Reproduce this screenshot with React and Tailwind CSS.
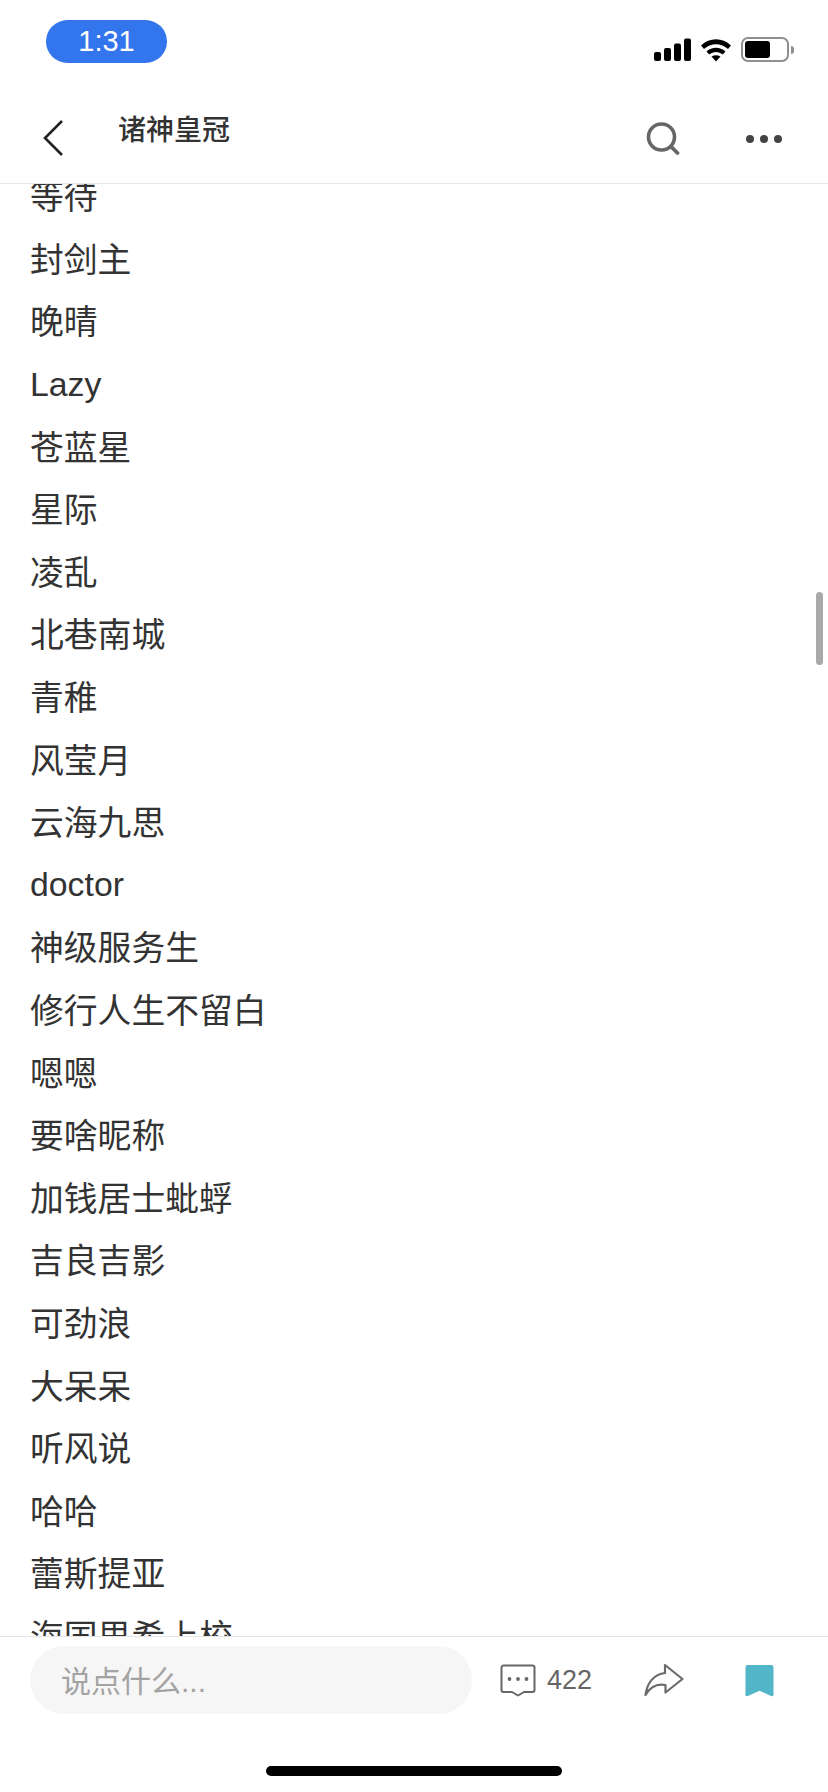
const names = ["等待","封剑主","晚晴","Lazy","苍蓝星","星际","凌乱","北巷南城","青稚","风莹月","云海九思","doctor","神级服务生","修行人生不留白","嗯嗯","要啥昵称","加钱居士蚍蜉","吉良吉影","可劲浪","大呆呆","听风说","哈哈","蕾斯提亚","海国思希上校"];

const sans = { fontFamily: '"Liberation Sans", "Noto Sans CJK SC", sans-serif' };

function StatusIcons() {
  return (
    <div className="flex items-center">
      <svg width="38" height="24" viewBox="0 0 38 24" className="mr-[9px]">
        <rect x="1" y="14" width="7" height="9" rx="2" fill="#000" />
        <rect x="11" y="10" width="7" height="13" rx="2" fill="#000" />
        <rect x="21" y="5.500" width="7" height="17.500" rx="2" fill="#000" />
        <rect x="31" y="0.500" width="7" height="22.500" rx="2" fill="#000" />
      </svg>
      <svg width="32" height="25" viewBox="0 0 32 25" className="mr-[9px]">
        <path d="M1 8.500C9.500 0 22.500 0 31 8.500L28 12C21 5.500 11 5.500 4 12Z" fill="#000" />
        <path d="M6.500 14.500C12 9.500 20 9.500 25.500 14.500L22.800 17.500C18.500 14 13.500 14 9.200 17.500Z" fill="#000" />
        <path d="M11.500 19.500C14.500 17.800 17.500 17.800 20.500 19.500L16 24.500Z" fill="#000" />
      </svg>
      <div className="flex items-center">
        <div className="flex h-[25px] w-[48px] items-center rounded-[7px] border-[2px] border-[#8f8f8f] p-[2px]">
          <div className="h-[17px] w-[25px] rounded-[3px] bg-black" />
        </div>
        <div className="ml-[2px] h-[8px] w-[3px] rounded-r-full bg-[#8f8f8f]" />
      </div>
    </div>
  );
}

function Header() {
  return (
    <div className="relative flex h-[97px] shrink-0 items-center border-b border-[#e9e9e9] pl-[42px] pr-[46px]">
      <svg width="22" height="38" viewBox="0 0 22 38" className="mt-[6px]">
        <path d="M20 2 L3 19 L20 36" fill="none" stroke="#222" strokeWidth="2.600" />
      </svg>
      <div className="ml-[54px] -mt-[8px] text-[28px] font-medium leading-[36px] text-[#333]" style={sans}>诸神皇冠</div>
      <div className="ml-auto mt-[8px] flex items-center gap-[66px]">
        <svg width="34" height="34" viewBox="0 0 34 34">
          <circle cx="15.500" cy="15" r="13" fill="none" stroke="#666" strokeWidth="3.600" />
          <path d="M25 24.500 L31.500 31" fill="none" stroke="#666" strokeWidth="3.800" strokeLinecap="round" />
        </svg>
        <div className="flex items-center gap-[6px]">
          <span className="h-[8px] w-[8px] rounded-full bg-[#444]" />
          <span className="h-[8px] w-[8px] rounded-full bg-[#444]" />
          <span className="h-[8px] w-[8px] rounded-full bg-[#444]" />
        </div>
      </div>
    </div>
  );
}

function BottomBar() {
  return (
    <div className="flex h-[156px] shrink-0 flex-col border-t border-[#e6e6e6]">
      <div className="mt-[9px] flex items-center pl-[30px]">
        <div className="flex h-[68px] w-[442px] items-center rounded-full bg-[#f6f6f6] pl-[31px] pt-[4px] text-[30px] leading-[40px] text-[#a3a3a3]" style={sans}>说点什么...</div>
        <svg width="36" height="33" viewBox="0 0 36 33" className="ml-[28px]">
          <path d="M3.500 1.500H32.500A2 2 0 0 1 34.500 3.500V26A2 2 0 0 1 32.500 28H24L18 31.500L12 28H3.500A2 2 0 0 1 1.500 26V3.500A2 2 0 0 1 3.500 1.500Z" fill="none" stroke="#666" strokeWidth="2" strokeLinejoin="round" />
          <circle cx="9.500" cy="15" r="1.900" fill="#666" />
          <circle cx="18" cy="15" r="1.900" fill="#666" />
          <circle cx="26.500" cy="15" r="1.900" fill="#666" />
        </svg>
        <span className="ml-[11px] text-[27px] text-[#666]" style={sans}>422</span>
        <svg width="40" height="34" viewBox="0 0 40 34" className="ml-[52px]">
          <path d="M1.500 32C3 20 10 11 21 10V2L38.500 16L21.500 29.500V22C13 20.500 6 24 1.500 32Z" fill="none" stroke="#6b6b6b" strokeWidth="2.200" strokeLinejoin="round" />
        </svg>
        <svg width="29" height="33" viewBox="0 0 30 33" className="ml-[61px]">
          <path d="M3 0.500H27A2.500 2.500 0 0 1 29.500 3V31C29.500 32.500 28.500 33 27 32.500L15 27L3 32.500C1.500 33 0.500 32.500 0.500 31V3A2.500 2.500 0 0 1 3 0.500Z" fill="#53b5c8" />
        </svg>
      </div>
      <div className="mt-[52px] flex justify-center pr-[1px]">
        <div className="h-[10px] w-[296px] rounded-full bg-black" />
      </div>
    </div>
  );
}

export default function App() {
  return (
    <div className="relative flex h-[1792px] w-[828px] flex-col overflow-hidden bg-white">
      <div className="flex h-[87px] shrink-0 items-start justify-between pl-[46px] pr-[34px]">
        <div className="mt-[20px] flex h-[43px] w-[121px] items-center justify-center rounded-full bg-[#3275ec] text-[29px] leading-none text-white" style={sans}>1:31</div>
        <div className="mt-[37px]"><StatusIcons /></div>
      </div>
      <Header />
      <div className="relative min-h-0 flex-1 overflow-hidden">
        <div className="-mt-[18px] pl-[30px] text-[33.800px] leading-[40px] text-[#333]" style={sans}>
          {names.map((n) => (
            <div key={n} className={/^[a-z]/i.test(n) ? "flex h-[62.600px] items-center pb-[3px]" : "flex h-[62.600px] items-center"}>{n}</div>
          ))}
        </div>
        <div className="absolute right-[5px] top-[408px] h-[73px] w-[7px] rounded-full bg-[#a9a9a9]" />
      </div>
      <BottomBar />
    </div>
  );
}
